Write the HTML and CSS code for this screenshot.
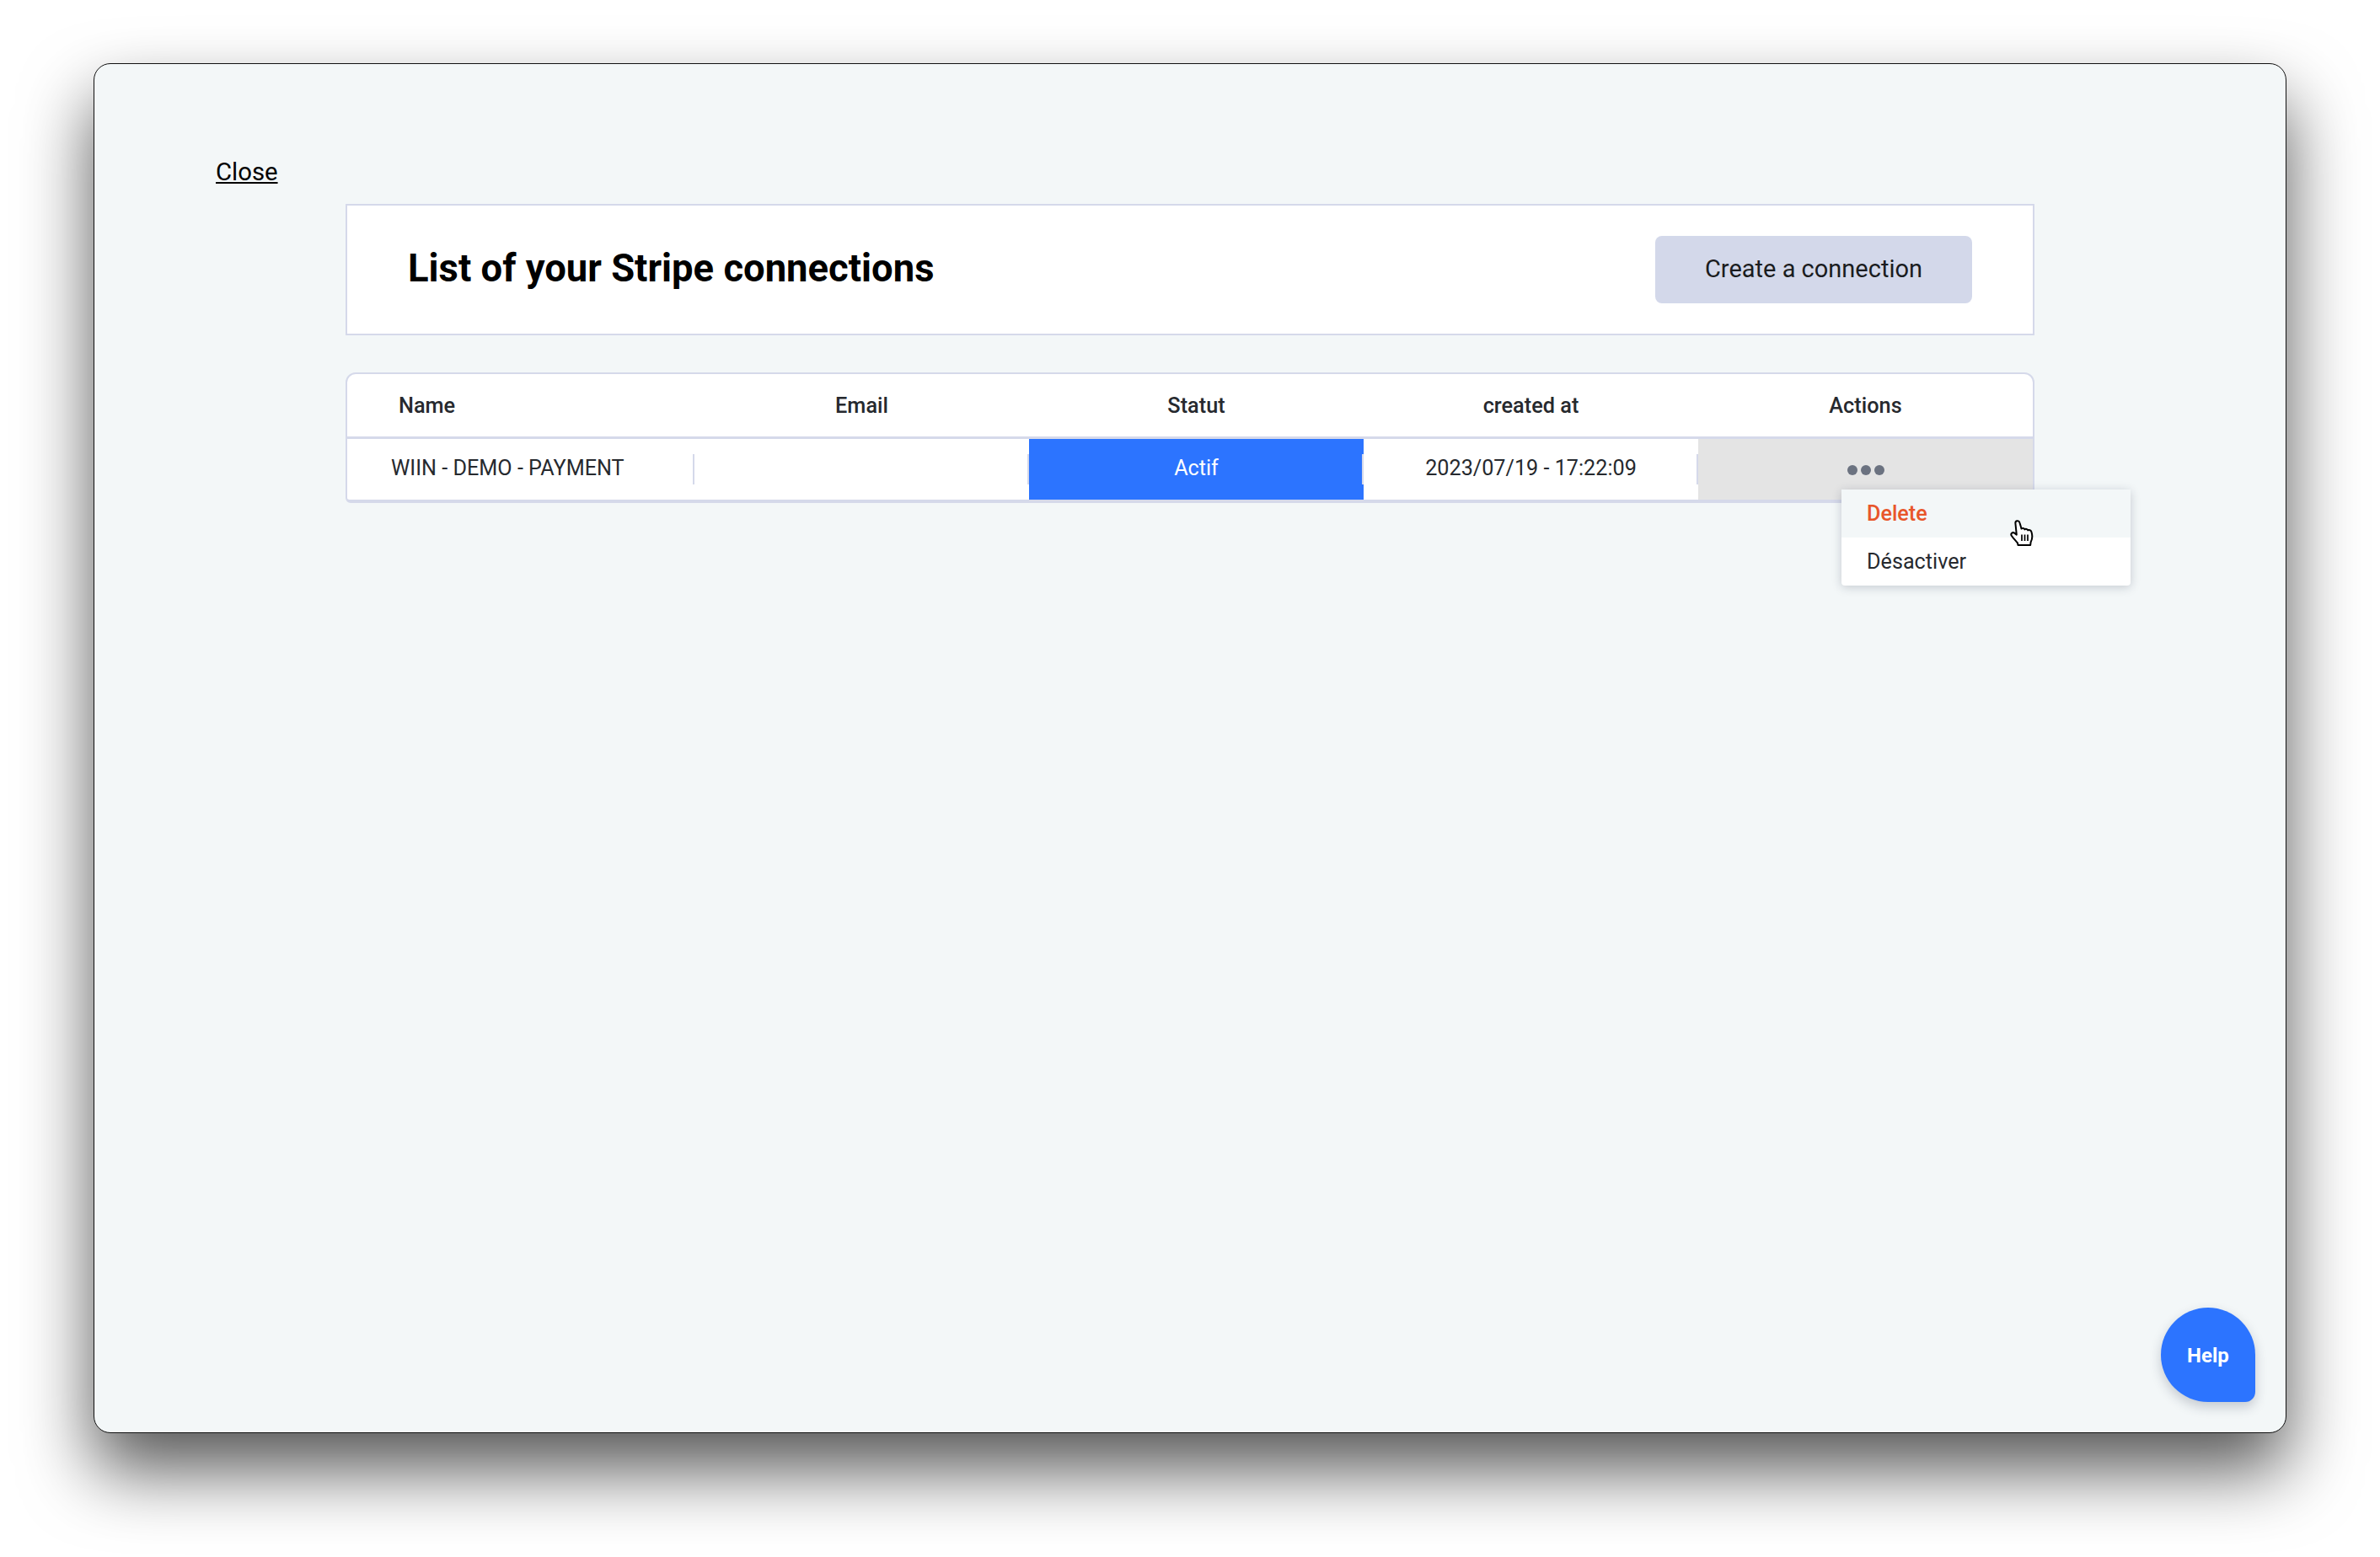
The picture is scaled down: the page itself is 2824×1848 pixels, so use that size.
FILE: index.html
```html
<!DOCTYPE html>
<html lang="en">
<head>
<meta charset="utf-8">
<title>Stripe connections</title>
<link rel="stylesheet" href="styles.css">
</head>
<body>
<div class="window">
  <a class="close" href="#">Close</a>
  <div class="content">
    <header class="head-card">
      <h1 class="title">List of your Stripe connections</h1>
      <button class="create">Create a connection</button>
    </header>
    <section class="table">
      <div class="row head">
        <div class="cell name-head">Name</div>
        <div class="cell center">Email</div>
        <div class="cell center">Statut</div>
        <div class="cell center">created at</div>
        <div class="cell center">Actions</div>
      </div>
      <div class="row body">
        <div class="cell name sep">WIIN - DEMO - PAYMENT</div>
        <div class="cell center sep"></div>
        <div class="cell center sep active">Actif</div>
        <div class="cell center sep">2023/07/19 - 17:22:09</div>
        <div class="cell center actions">
          <span class="dots"><i></i><i></i><i></i></span>
          <div class="menu">
            <div class="item danger">Delete</div>
            <div class="item">Désactiver</div>
            <svg class="cursor" width="30" height="32" viewBox="0 0 30 32">
              <path d="M9.5 30 L9 27.5 C6.5 24.5 3.5 21.5 1.6 18.5 C.6 16.4 2.8 14.2 5.2 15.6 L7.8 17.6 L6.4 4 C6.1 .8 10.6 .2 11.4 3.2 L13.6 10.6 C14.8 9.4 16.8 9.8 17.4 11.4 C18.6 10.4 20.6 10.8 21.2 12.4 C22.6 11.6 24.8 12.2 25.4 14.2 C26.8 18.6 26.8 22.5 24.6 26.5 L24.2 30 Z" fill="#fff" stroke="#000" stroke-width="2" stroke-linejoin="round"/>
              <path d="M14 17.5V25M17.5 17.5V25M21 17.5V25" stroke="#000" stroke-width="1.7" fill="none"/>
            </svg>
          </div>
        </div>
      </div>
    </section>
  </div>
  <button class="help">Help</button>
</div>
</body>
</html>
```

FILE: styles.css
```css
* { box-sizing: border-box; }
html, body { margin: 0; height: 100%; background: #fff; overflow: hidden; }
body { padding: 75px 111px 0; font-family: Roboto, "Liberation Sans", sans-serif; color: #26292e; }

.window {
  position: relative;
  height: 1626px;
  padding: 108px 145px 0;
  background: #f3f7f8;
  border: 1px solid #111;
  border-radius: 20px;
  box-shadow: 0 44px 84px rgba(0, 0, 0, .66);
}

.close { display: block; width: max-content; margin-left: -1px; font-size: 29.3px; line-height: 40px; color: #000; text-decoration: underline; }

.content { width: 2004px; margin: 18px auto 0; }

.head-card {
  display: flex;
  align-items: center;
  justify-content: space-between;
  height: 156px;
  padding: 0 72px;
  background: #fff;
  border: 2px solid #d5d9ea;
}
.title { margin: 0 0 3px; font-size: 45.4px; font-weight: 700; color: #000; }
.create {
  width: 376px;
  height: 80px;
  padding-bottom: 3px;
  border: 0;
  border-radius: 8px;
  background: #d3d8ea;
  font: 400 29px Roboto, sans-serif;
  color: #1a1c20;
}

.table {
  margin-top: 44px;
  background: #fff;
  border: 2px solid #d5d9ea;
  border-bottom-width: 4px;
  border-radius: 12px 12px 6px 6px;
}
.row { display: grid; grid-template-columns: 412px 397px 397px 397px 397px; }
.head { height: 77px; border-bottom: 3px solid #d5d9ea; font-size: 25.3px; font-weight: 500; }
.body { height: 72px; font-size: 25.2px; }

.cell { position: relative; display: flex; align-items: center; }
.body .cell { padding-bottom: 4px; }
.center { justify-content: center; }
.name-head { padding-left: 61px; }
.name { padding-left: 52px; }
.sep::after {
  content: "";
  position: absolute;
  right: 0;
  top: 18px;
  width: 2px;
  height: 36px;
  background: #d5d9ea;
}
.active { background: #2c74ff; color: #fff; }
.actions { background: #e4e4e4; }

.dots { display: flex; gap: 4px; margin-top: 6px; }
.dots i { width: 12px; height: 12px; border-radius: 50%; background: #6b7280; }

.menu {
  position: absolute;
  left: 170px;
  top: 60px;
  width: 343px;
  background: #fff;
  border-radius: 4px;
  box-shadow: 0 2px 12px rgba(30, 40, 70, .22);
  font-size: 25.2px;
  z-index: 2;
}
.item { display: flex; align-items: center; height: 57px; padding-left: 30px; color: #26292e; }
.danger { background: #f3f7f8; color: #e8562a; font-weight: 500; }
.cursor { position: absolute; left: 200px; top: 36px; }

.help {
  position: absolute;
  right: 36px;
  bottom: 36px;
  width: 112px;
  height: 112px;
  padding-top: 3px;
  border: 0;
  border-radius: 50% 50% 12px 50%;
  background: #2c74ff;
  color: #fff;
  font: 700 24px Roboto, sans-serif;
  box-shadow: 0 6px 14px rgba(30, 40, 70, .22);
}
```
